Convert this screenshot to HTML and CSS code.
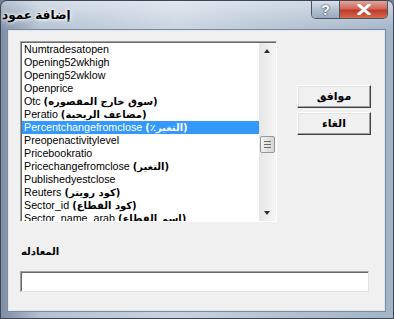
FILE: index.html
```html
<!DOCTYPE html>
<html lang="ar">
<head>
  <meta charset="UTF-8">
  <title>إضافة عمود</title>
  <link rel="stylesheet" href="styles.css">
</head>
<body>
  <div class="window">
    <div class="titlebar">
      <span class="title">إضافة عمود</span>
      <div class="caption">
        <span class="cap-btn help">?</span>
        <span class="cap-btn close">
          <svg width="14" height="11" viewBox="0 0 14 11">
            <path d="M2 1 L12 10 M12 1 L2 10" stroke="#fff" stroke-width="3" stroke-linecap="square"/>
          </svg>
        </span>
      </div>
    </div>

    <div class="client">
      <div class="top-row">
        <div class="listbox">
          <ul class="items">
            <li>Numtradesatopen</li>
            <li>Opening52wkhigh</li>
            <li>Opening52wklow</li>
            <li>Openprice</li>
            <li>Otc <span class="ar">(سوق خارج المقصوره)</span></li>
            <li>Peratio <span class="ar">(مضاعف الربحية)</span></li>
            <li class="selected">Percentchangefromclose <span class="ar">(٪التغير)</span></li>
            <li>Preopenactivitylevel</li>
            <li>Pricebookratio</li>
            <li>Pricechangefromclose <span class="ar">(التغير)</span></li>
            <li>Publishedyestclose</li>
            <li>Reuters <span class="ar">(كود رويتر)</span></li>
            <li>Sector_id <span class="ar">(كود القطاع)</span></li>
            <li class="partial">Sector_name_arab <span class="ar">(اسم القطاع)</span></li>
          </ul>
          <div class="scrollbar">
            <div class="arrow up"></div>
            <div class="track">
              <div class="thumb"><i></i><i></i><i></i></div>
            </div>
            <div class="arrow down"></div>
          </div>
        </div>

        <div class="buttons">
          <button class="btn">موافق</button>
          <button class="btn">الغاء</button>
        </div>
      </div>

      <div class="label">المعادله</div>
      <div class="formula"></div>
    </div>
  </div>
</body>
</html>
```

FILE: styles.css
```css
body {
  margin: 0;
  font-family: "Liberation Sans", "DejaVu Sans", sans-serif;
  background: #6f7f94;
}
.window {
  width: 394px;
  height: 319px;
  box-sizing: border-box;
  display: flex;
  flex-direction: column;
  border: 1px solid #3c4654;
  border-radius: 7px 7px 0 0;
  background:
    linear-gradient(to bottom, rgba(255,255,255,0.45), rgba(255,255,255,0) 30px),
    linear-gradient(to right, #7d8ea6, #b3c1d3 10%, #c9d4e1 45%, #b5c3d3 70%, #a3b4c9);
}
.titlebar {
  height: 29px;
  display: flex;
  justify-content: space-between;
  align-items: flex-start;
  padding: 0 5px 0 1px;
}
.title {
  margin-top: 7px;
  font-size: 12px;
  font-weight: bold;
  color: #000;
  text-shadow: 0 0 5px #fff, 0 0 3px #fff;
}
.caption {
  display: flex;
  border: 1px solid #4a5566;
  border-top: none;
  border-radius: 0 0 5px 5px;
  overflow: hidden;
}
.cap-btn {
  height: 17px;
  display: flex;
  align-items: center;
  justify-content: center;
}
.help {
  width: 27px;
  font-size: 14px;
  font-weight: bold;
  color: #fff;
  text-shadow: 0 0 2px #33455e, 0 0 1px #33455e;
  background: linear-gradient(to bottom, #d9e2ec, #b3c0d1 50%, #9aaac0);
  border-right: 1px solid #4a5566;
}
.close {
  width: 47px;
  background: linear-gradient(to bottom, #e3a59a, #d0665a 45%, #bf3a2b 55%, #d46a4e);
}
.client {
  flex: 1;
  margin: 0 8px 7px 7px;
  background: #f0f0f0;
  border: 1px solid #dfe6ee;
  box-shadow: 0 0 0 1px #7d8ba0;
  padding: 10px 0 0 11px;
}
.top-row {
  display: flex;
  align-items: flex-start;
}
.listbox {
  width: 255px;
  height: 179px;
  display: flex;
  border: 1px solid;
  border-color: #a0a0a0 #ffffff #ffffff #a0a0a0;
  box-shadow: inset 1px 1px #696969;
  background: #fff;
  overflow: hidden;
}
.items {
  list-style: none;
  margin: 0;
  padding: 1px 0 0 1px;
  flex: 1;
  font-size: 10.7px;
}
.items li {
  height: 13px;
  line-height: 13px;
  padding-left: 2px;
  white-space: nowrap;
  color: #000;
}
.items li.partial {
  line-height: 12px;
}
.items li.selected {
  background: #3399ff;
  color: #fff;
}
.ar {
  font-family: "DejaVu Sans", sans-serif;
  font-weight: bold;
  font-size: 10px;
}
.scrollbar {
  width: 17px;
  display: flex;
  flex-direction: column;
  margin-top: 1px;
  background: linear-gradient(to right, #e6e6e6, #f5f5f5);
}
.arrow {
  height: 16px;
  position: relative;
}
.arrow::after {
  content: "";
  position: absolute;
  left: 5px;
  border-left: 3.5px solid transparent;
  border-right: 3.5px solid transparent;
}
.arrow.up::after {
  top: 6px;
  border-bottom: 4px solid #303030;
}
.arrow.down::after {
  top: 6px;
  border-top: 4px solid #303030;
}
.track {
  flex: 1;
  padding-top: 77px;
}
.thumb {
  height: 15px;
  margin: 0 1px;
  border: 1px solid #969696;
  border-radius: 2px;
  background: linear-gradient(to right, #f2f2f2, #e2e2e2 50%, #d6d6d6);
  display: flex;
  flex-direction: column;
  align-items: center;
  justify-content: center;
  gap: 2px;
}
.thumb i {
  display: block;
  width: 7px;
  height: 1px;
  background: #6e6e6e;
}
.buttons {
  display: flex;
  flex-direction: column;
  gap: 4px;
  margin-left: 20px;
  margin-top: 44px;
}
.btn {
  width: 74px;
  height: 23px;
  padding: 0;
  font-family: "DejaVu Sans", sans-serif;
  font-size: 11px;
  font-weight: bold;
  color: #000;
  background: #f0f0f0;
  border: 1px solid;
  border-color: #ffffff #404040 #404040 #ffffff;
  box-shadow: inset -1px -1px #a0a0a0, inset 1px 1px #e3e3e3;
}
.label {
  margin-top: 24px;
  height: 14px;
  font-family: "DejaVu Sans", sans-serif;
  font-size: 10px;
  font-weight: bold;
  padding-left: 1px;
}
.formula {
  margin-top: 11px;
  width: 347px;
  height: 19px;
  background: #fff;
  border: 1px solid;
  border-color: #a0a0a0 #e3e3e3 #e3e3e3 #a0a0a0;
  box-shadow: inset 1px 1px #696969;
}
```
